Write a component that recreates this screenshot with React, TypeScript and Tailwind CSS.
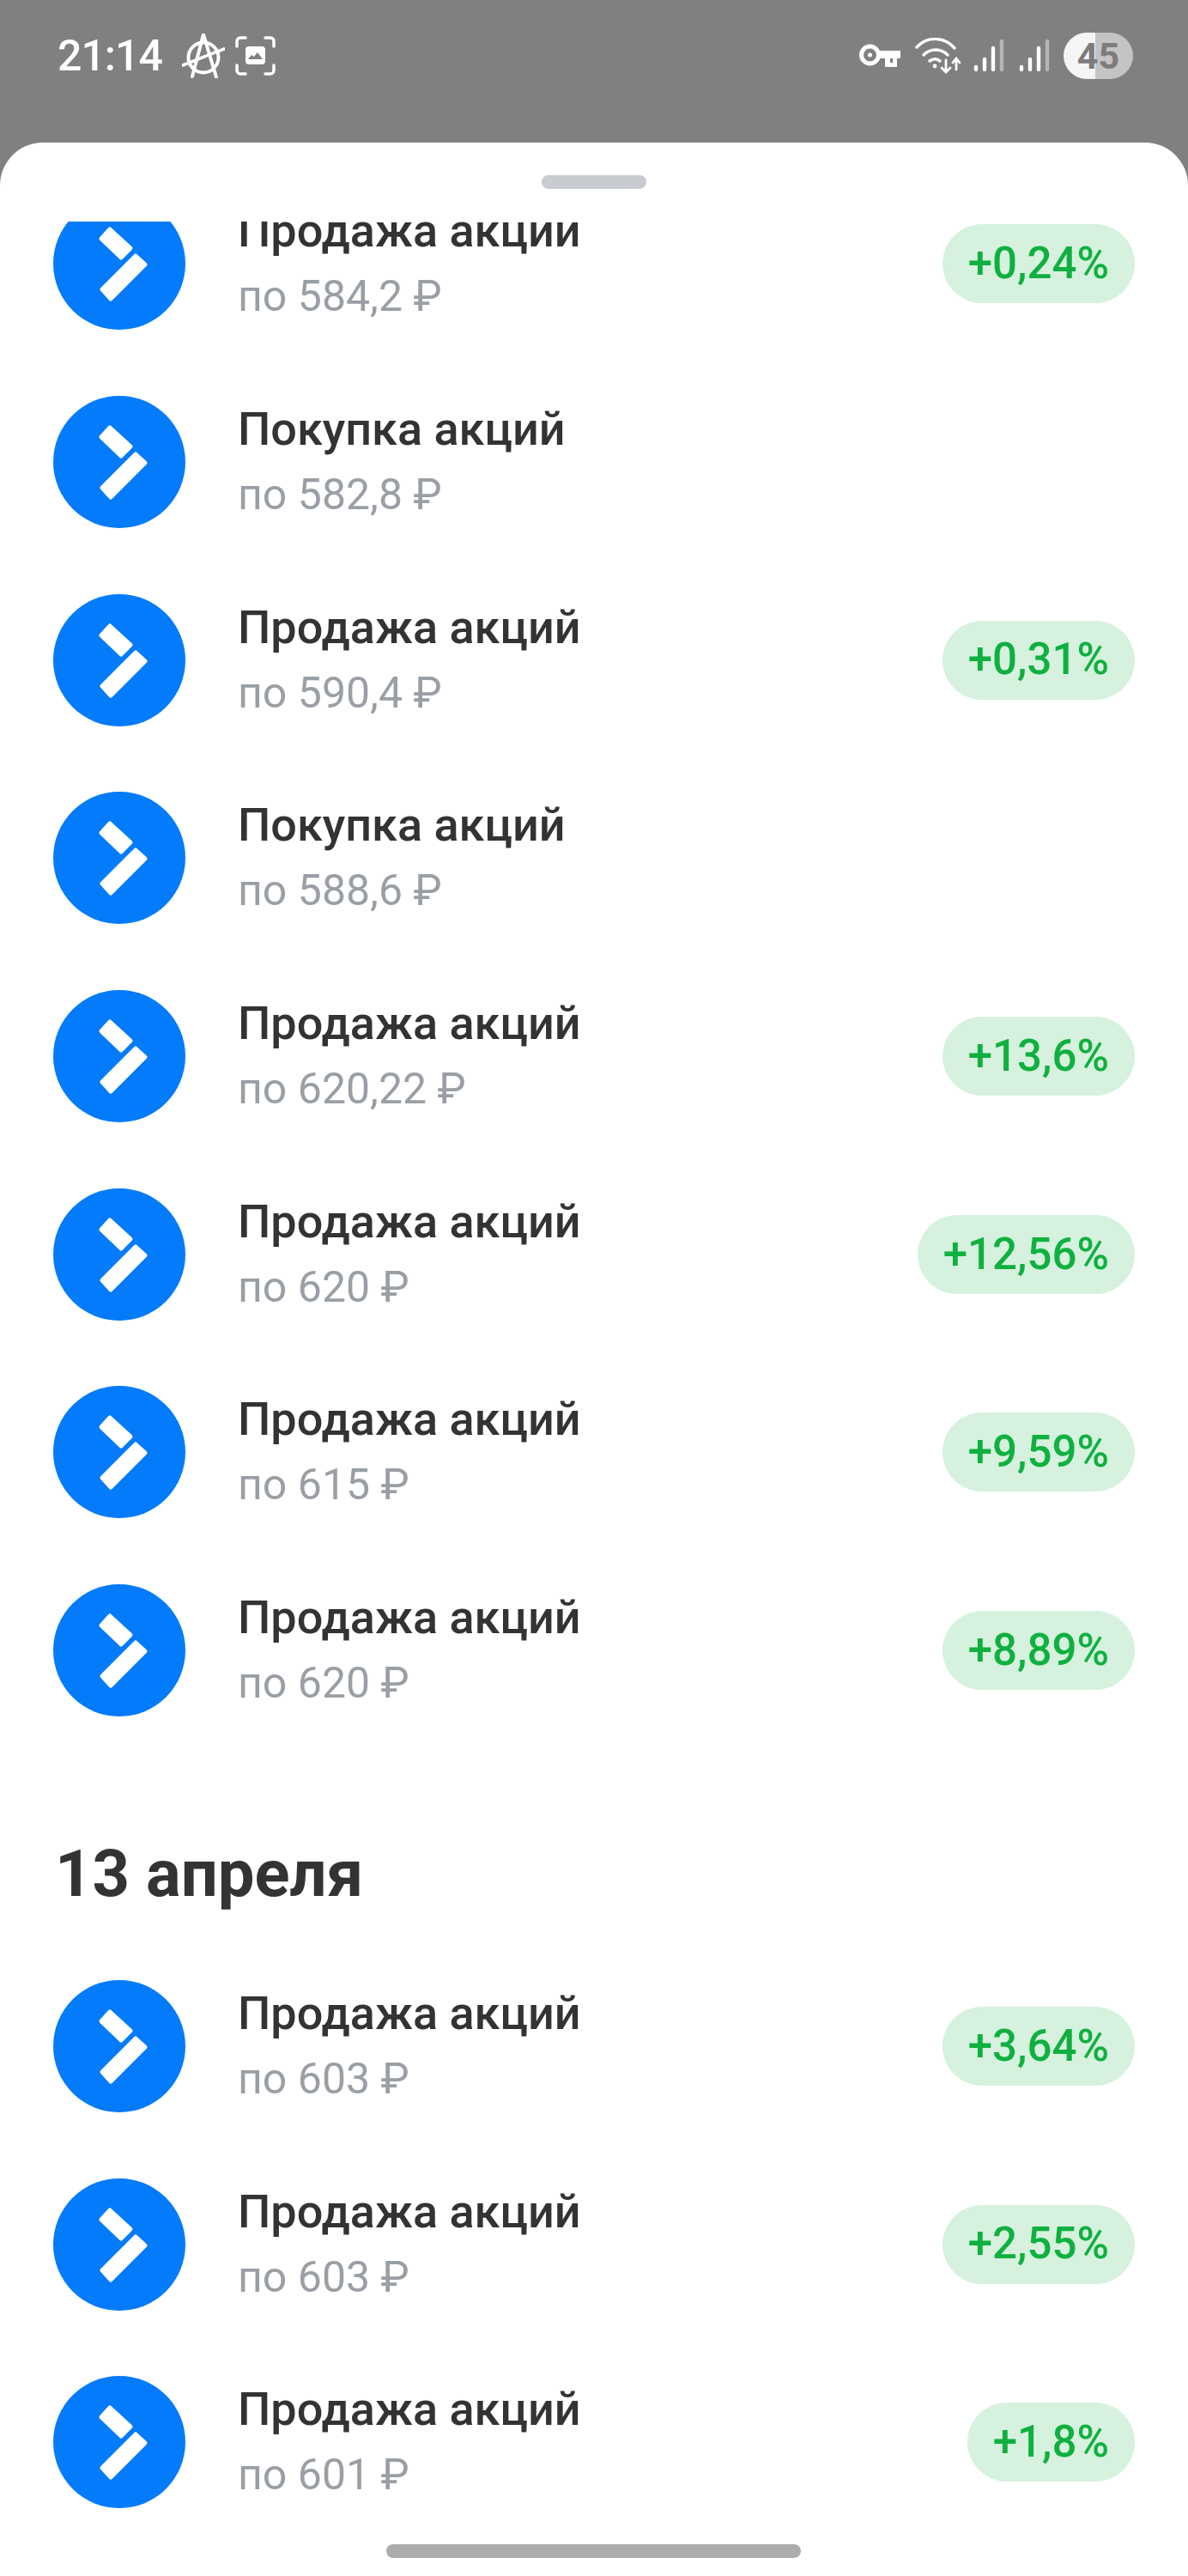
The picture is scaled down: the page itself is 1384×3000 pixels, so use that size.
const font = { fontFamily: "Roboto, 'Noto Sans', sans-serif" };

function Logo() {
  return (
    <div className="w-[154px] h-[154px] rounded-full bg-[#047bfb] shrink-0">
      <svg viewBox="0 0 154 154" width="154" height="154">
        <polygon points="66,37 90,59 79,70 56,48" fill="#fff" stroke="#fff" strokeWidth="5" strokeLinejoin="round" />
        <polygon points="96,68 107,78 67,118 57,107" fill="#fff" stroke="#fff" strokeWidth="5" strokeLinejoin="round" />
      </svg>
    </div>
  );
}

function Row({ title, price, pct }: { title: string; price: string; pct?: string }) {
  return (
    <div className="h-[230.7px] shrink-0 pl-[62px] pr-[62px] flex items-center">
      <Logo />
      <div className="ml-[61px] flex-1 flex flex-col">
        <div className="text-[54px] leading-[76px] font-medium text-[#333333]">{title}</div>
        <div className="text-[50px] leading-[76px] text-[#9a9fa6]">{price}</div>
      </div>
      {pct && (
        <div className="h-[92px] px-[30px] rounded-[46px] bg-[#d6f2de] text-[#0fb03f] text-[51px] font-medium flex items-center">
          {pct}
        </div>
      )}
    </div>
  );
}

function Anarchy() {
  return (
    <svg width="50" height="52" viewBox="0 0 50 52" fill="none" stroke="#fff" strokeLinecap="round" strokeLinejoin="round">
      <circle cx="25" cy="28" r="17.5" strokeWidth="4" />
      <path d="M25 1 L12 50 M25 1 L40 51" strokeWidth="4" />
      <path d="M1 37 L49 18" strokeWidth="3.5" />
    </svg>
  );
}

function Shot() {
  return (
    <svg width="47" height="46" viewBox="0 0 47 46" fill="none">
      <path d="M2 12V6a4 4 0 0 1 4-4h6M35 2h6a4 4 0 0 1 4 4v6M45 34v6a4 4 0 0 1-4 4h-6M12 44H6a4 4 0 0 1-4-4v-6" stroke="#fff" strokeWidth="3.5" strokeLinecap="round" />
      <rect x="12" y="12" width="23" height="21" rx="4" fill="#fff" />
      <path d="M15 27l4-5 3 2 4-5 6 8z" fill="#808080" />
    </svg>
  );
}

function Key() {
  return (
    <svg width="48" height="28" viewBox="0 0 48 28" fill="none">
      <circle cx="12.5" cy="13" r="10" stroke="#fff" strokeWidth="5" />
      <circle cx="12.5" cy="13" r="2.5" fill="#fff" />
      <path d="M23 8h25v9h-4v10h-14v-10h-7z" fill="#fff" />
      <rect x="36" y="17" width="3" height="5" fill="#808080" />
    </svg>
  );
}

function Wifi() {
  return (
    <svg width="56" height="42" viewBox="0 0 56 42" fill="none" stroke="#fff" strokeLinecap="round">
      <path d="M2 11C14 -2 33 -2 46 12" strokeWidth="3.5" />
      <path d="M10 20C18 12 30 12 38 20" strokeWidth="3.5" />
      <path d="M17 27C21 24 26 24 29 27" strokeWidth="3.5" />
      <circle cx="23" cy="33" r="2.4" fill="#fff" stroke="none" />
      <path d="M36 26V40M31 35l5 5 5-5" strokeWidth="2.8" />
      <path d="M48 37V24M44 29l4-5 4 5" strokeWidth="2.8" />
    </svg>
  );
}

function Signal() {
  return (
    <svg width="36" height="38" viewBox="0 0 36 38" fill="none" strokeLinecap="round" strokeWidth="4.4">
      <path d="M3 32v3M13 23v12M23 10v25" stroke="#fff" />
      <path d="M33 2v33" stroke="#b5b5b5" />
    </svg>
  );
}

const first = [
  ["Продажа акций", "по 584,2 ₽", "+0,24%"],
  ["Покупка акций", "по 582,8 ₽", ""],
  ["Продажа акций", "по 590,4 ₽", "+0,31%"],
  ["Покупка акций", "по 588,6 ₽", ""],
  ["Продажа акций", "по 620,22 ₽", "+13,6%"],
  ["Продажа акций", "по 620 ₽", "+12,56%"],
  ["Продажа акций", "по 615 ₽", "+9,59%"],
  ["Продажа акций", "по 620 ₽", "+8,89%"],
];
const second = [
  ["Продажа акций", "по 603 ₽", "+3,64%"],
  ["Продажа акций", "по 603 ₽", "+2,55%"],
  ["Продажа акций", "по 601 ₽", "+1,8%"],
];

export default function App() {
  return (
    <div className="h-[3000px] w-[1384px] bg-[#808080] flex flex-col overflow-hidden" style={font}>
      <div className="h-[166px] shrink-0 pb-[36px] pl-[67px] pr-[64px] flex items-center text-white">
        <span className="text-[50px] font-medium leading-none tracking-[-1px]">21:14</span>
        <div className="ml-[23px]"><Anarchy /></div>
        <div className="ml-[12px]"><Shot /></div>
        <div className="flex-1" />
        <Key />
        <div className="ml-[17px]"><Wifi /></div>
        <div className="ml-[12px]"><Signal /></div>
        <div className="ml-[17px]"><Signal /></div>
        <div className="ml-[16px] w-[81px] h-[54px] rounded-[27px] overflow-hidden relative flex">
          <div className="w-[37px] bg-[#f5f5f5]" />
          <div className="flex-1 bg-[#c4c4c4]" />
          <div className="absolute inset-0 flex items-center justify-center text-[#7c7c7c] text-[43px] font-bold leading-none">45</div>
        </div>
      </div>
      <div className="flex-1 bg-white rounded-t-[50px] flex flex-col relative overflow-hidden">
        <div className="h-[92px] shrink-0 flex justify-center pt-[38px]">
          <div className="w-[122px] h-[16px] rounded-full bg-[#c8ccd0]" />
        </div>
        <div className="flex-1 overflow-hidden">
          <div className="flex flex-col mt-[-66px]">
            {first.map((r, i) => (
              <Row key={i} title={r[0]} price={r[1]} pct={r[2]} />
            ))}
            <div className="h-[230px] shrink-0 pl-[64px] flex items-center pt-[58px]">
              <h2 className="text-[76px] leading-none font-bold text-[#333333]">13 апреля</h2>
            </div>
            {second.map((r, i) => (
              <Row key={i} title={r[0]} price={r[1]} pct={r[2]} />
            ))}
          </div>
        </div>
        <div className="absolute bottom-[21px] left-[450px] w-[483px] h-[16px] rounded-full bg-[#adadad]" />
      </div>
    </div>
  );
}
